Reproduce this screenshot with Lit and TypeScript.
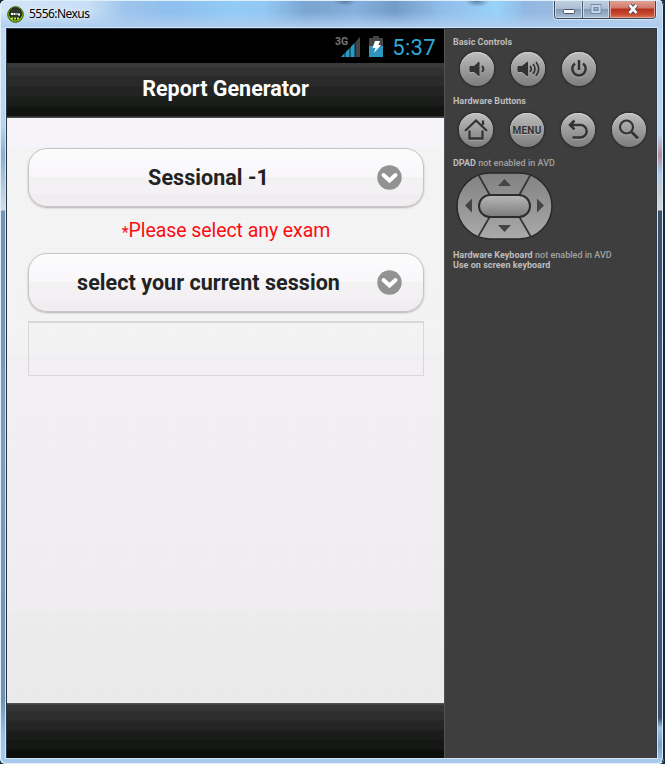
import { LitElement, html, css, svg } from "lit";
import { customElement, property } from "lit/decorators.js";

const glyphs: Record<string, unknown> = {
  down: svg`<path d="M10 14.500h4l5-4.500v14l-5-4.500h-4z" fill="#333" stroke-width="1"/><path d="M22 14q2.800 3 0 6" />`,
  up: svg`<path d="M7 14.500h4l5.500-4.500v14l-5.500-4.500h-4z" fill="#333" stroke-width="1"/><path d="M19 14q2.500 3 0 6M22 12q4 5 0 10M25 10q5.300 7 0 14" stroke-width="1.700"/>`,
  power: svg`<path d="M13 11.500A6.700 6.700 0 1 0 21 11.500M17 8v10" stroke-width="2.500"/>`,
  home: svg`<path d="M6 18 17 7.500 28 18M24 12V7.500M10.500 17.500V25.500H23.500V17.500" stroke-width="2.300"/>`,
  back: svg`<path d="M13.500 7.500 9 12 13.500 16.500M10 12H19.500a6.200 6.200 0 0 1 0 12.400H11.500" stroke-width="2.500"/>`,
  search: svg`<circle cx="14.500" cy="14" r="6.500" stroke-width="2.200"/><path d="M19.500 19 26 25.500" stroke-width="3"/>`,
};

@customElement("hw-button")
class HwButton extends LitElement {
  @property() kind = "";
  static styles = css`
    :host { display: block; width: 34px; height: 34px; border-radius: 50%; box-sizing: border-box;
      background: linear-gradient(#bebebe, #999 55%, #7d7d7d); box-shadow: 0 0 2px 1px #292929, inset 0 1px 0 #d0d0d0; }
    svg { display: block; fill: none; stroke: #333; stroke-width: 2; filter: drop-shadow(0 1px 0 #aaa); }
    .menu { display: block; text-align: center; font: 700 10px/35px Roboto, sans-serif; letter-spacing: 0.3px; color: #333; text-shadow: 0 1px 0 #bbb; }
  `;
  render() {
    return this.kind === "menu"
      ? html`<span class="menu">MENU</span>`
      : html`<svg width="34" height="34" viewBox="0 0 34 34">${glyphs[this.kind]}</svg>`;
  }
}

@customElement("select-field")
class SelectField extends LitElement {
  @property() label = "";
  static styles = css`
    :host { display: grid; grid-template-columns: 1fr 25px; align-items: center; box-sizing: border-box; height: 59px;
      padding: 0 21px 0 11px; border: 1px solid #c6c4c6; border-radius: 19px;
      background: linear-gradient(#fdfcfd, #f8f6f9 49%, #f3f2f3 50%, #f3f1f3 78%, #f1edf1 80%, #f1edf1);
      box-shadow: 0 1px 2px 0 #b5b3b5; color: #222; font: 700 21.500px/28px Roboto, sans-serif; letter-spacing: 0.05px; }
    span { text-align: center; white-space: nowrap; }
    svg { display: block; }
  `;
  render() {
    return html`<span>${this.label}</span>
      <svg width="25" height="25" viewBox="0 0 25 25"><circle cx="12.500" cy="12.500" r="12.200" fill="#929292"/>
      <path d="M6.500 10 12.500 15.500 18.500 10" fill="none" stroke="#fff" stroke-width="4" stroke-linecap="round"/></svg>`;
  }
}

@customElement("app-root")
class AppRoot extends LitElement {
  static styles = css`
    :host { display: block; width: 665px; height: 764px; overflow: hidden; background: #172b3a; font-family: Roboto, sans-serif; }
    * { box-sizing: border-box; }
    .window { position: relative; width: 664px; height: 764px; display: grid; grid-template-rows: 28px 730px 6px;
      border-radius: 6px 6px 5px 5px; background:
        linear-gradient(#a9c9ec, #a9c9ec) 0 758px / 100% 6px no-repeat,
        linear-gradient(#c5dbf2 28px, #bcd3ec 125px, #8faecb 155px, #d4dde6 210px, #7592b0 211px, #7e9dbb 450px, #7292b2 700px, #9dc1e5 735px, #a9c9ec) 0 0 / 7px 100% no-repeat,
        linear-gradient(#b3d4f5 28px, #bcd3ec 135px, #b38c96 155px, #aac8e8 173px, #c9cac9 190px, #d6d6d5 210px, #3c5066 211px, #4a5f78 500px, #3e5168 718px, #9dc1e5 728px, #7c9fc5 745px, #a9c9ec) 657px 0 / 7px 100% no-repeat, #a9c9ec; }
    .edge { position: absolute; inset: 0; border: 1px solid #e0f0fb; border-right: 1px solid #1b2732; border-radius: 6px; box-shadow: inset -1px 0 0 #d4e8f9; pointer-events: none; }
    .title { display: flex; align-items: flex-start; padding: 6px 8px 0 7px; border-radius: 6px 6px 0 0; background:
      linear-gradient(transparent 12px, rgba(174,205,239,.9) 26px),
      radial-gradient(ellipse 12px 5px at 345px 1px, rgba(77,111,146,.8), transparent),
      radial-gradient(ellipse 12px 6px at 477px 1px, rgba(77,111,146,.8), transparent),
      linear-gradient(90deg, #d4e5f7 0, #c6def6 90px, #9fc4ec 125px, #8ebfee 170px, #92cbf6 235px, #92c8f3 265px, #7ba6d2 305px, #7fa8d3 330px, #86b1de 355px, #739dc8 395px, #90bce9 440px, #98d2fa 497px, #92b8e2 525px, #9abae0 560px, #bed3ee 664px); }
    .logo { display: block; margin-right: 5px; }
    .name { font: 12px/15px "Noto Sans", sans-serif; color: #000; letter-spacing: -0.55px; text-shadow: 0 0 5px #fff; }
    .controls { display: flex; margin: -6px 0 0 auto; width: 102px; height: 19px; border: 1px solid #3c4654; border-top: 0; border-radius: 0 0 4px 4px; overflow: hidden; box-shadow: 0 0 0 1px #d5e8fa; }
    .controls svg { display: block; }
    .min, .max, .close { display: grid; place-items: center; background: linear-gradient(#c3d2e3, #adbfd4 47%, #8199b5 50%, #a8bfd7); box-shadow: inset 0 0 0 1px #cbd8e7; }
    .min { width: 28px; border-right: 1px solid #536478; }
    .max { width: 27px; border-right: 1px solid #536478; }
    .close { flex: 1; background: linear-gradient(#e2a696, #cf796a 45%, #b52f1d 50%, #c9492f 80%, #dc7c5d); box-shadow: inset 0 0 0 1px #e2a297; }
    .body { margin: 0 0 0 6px; display: grid; grid-template-columns: 439px 1fr; width: 651px; border-right: 1px solid #2c3540; outline: 1px solid #d2e5f5; background: #3e3e3e; }
    .phone { display: grid; grid-template-rows: 35px 55px 585px 55px; border-left: 1px solid #26384c; border-right: 1px solid #535353; }
    .status { display: flex; align-items: center; justify-content: flex-end; background: #000; border-top: 1px solid #26384c; padding-right: 8px; color: #30a9d9; font-size: 22px; line-height: 35px; }
    .status svg { display: block; }
    .status .time { padding-top: 3px; letter-spacing: 0.350px; margin-left: 8px; }
    .header { background: linear-gradient(#393939 0 4px, #303130 5px 13px, #292a29 14px 23px, #222322 24px 33px, #1b1d1b 34px 43px, #121412 44px 53px, #4c4c4c 54px); color: #fff; text-align: center; font-size: 21.500px; font-weight: 700; line-height: 51px; }
    .page { display: flex; flex-direction: column; padding: 30px 20px 0 21px;
      background: repeating-linear-gradient(90deg, rgba(0,0,0,.007) 0 1px, transparent 1px 10px), repeating-linear-gradient(rgba(0,0,0,.007) 0 1px, transparent 1px 10px), linear-gradient(#f7f5f9 0, #f6f4f8 29px, #f4f4f4 30px, #f3f3f3 235px, #f3f0f4 236px, #f0edf1 494px, #ececec 495px, #eaeaea); }
    .error { color: #fa0d12; font-size: 19.500px; line-height: 48px; text-align: center; height: 46px; letter-spacing: -0.07px; }
    .star { font-size: 16px; position: relative; top: 1px; }
    .box { height: 55px; margin-top: 9px; border: 1px solid #d8d8d8; border-top-width: 2px; }
    .footer { background: linear-gradient(#50534f 0 1px, #353535 2px 8px, #2c2d2c 9px 17px, #242524 18px 27px, #1b1d1b 28px 36px, #151715 37px 46px, #0c0e0c 47px 54px); }
    .side { padding: 8px 0 0 8px; border-top: 1px solid #26384c; color: #a2a2a2; font-size: 9px; line-height: 10px; font-weight: 500; letter-spacing: 0.02px; }
    .side b { color: #bdbdbd; font-weight: 700; }
    .row { display: flex; gap: 17px; padding-left: 7px; }
    .r1 { margin: 5px 0 10px; }
    .r2 { margin: 7px 0 11px; padding-left: 6px; }
    .line { height: 10px; white-space: nowrap; }
    .pad { display: block; margin: 4px 0 9px 2px; }
  `;
  render() {
    return html`<div class="window">
      <div class="title">
        <svg class="logo" width="17" height="17" viewBox="0 0 17 17"><circle cx="8.500" cy="8.500" r="7.800" fill="#83b520" stroke="#315006"/><circle cx="8.500" cy="7.800" r="6" fill="#30372d" stroke="#13200a"/><path d="M4 8h2M6.500 8h2M9.500 8h1M11 8.500h2" stroke="#fff" stroke-width="2"/><path d="M4 12.500h9" stroke="#b5ec30" stroke-width="2" stroke-dasharray="2 1"/></svg>
        <span class="name">5556:Nexus</span>
        <div class="controls">
          <div class="min"><svg width="14" height="18"><rect x="1.500" y="9.500" width="11" height="4" rx="1" fill="#fff" stroke="#4b5564"/></svg></div>
          <div class="max"><svg width="14" height="18"><rect x="2" y="4.500" width="10" height="9" fill="none" stroke="#738ba8"/><rect x="3.500" y="6" width="7" height="6" fill="none" stroke="#c5d5e7" stroke-width="2"/><rect x="5" y="7.500" width="4" height="3" fill="none" stroke="#738ba8"/></svg></div>
          <div class="close"><svg width="16" height="18"><path d="M4.500 5l7 8M11.500 5l-7 8" stroke="#513b48" stroke-width="4.500"/><path d="M4.500 5l7 8M11.500 5l-7 8" stroke="#f5f5f5" stroke-width="2.700"/></svg></div>
        </div>
      </div>
      <div class="body">
        <div class="phone">
          <div class="status">
            <svg width="50" height="35" viewBox="335 28 50 35"><text x="336" y="43.500" font-size="10.500" font-weight="700" fill="#777" font-family="Roboto, sans-serif">3G</text>
            <path d="M342 56 356 41.500V56z" fill="#299bc8"/><path d="M356 41.500 361 36v20h-5z" fill="#444"/><path d="M346 49v7M351 44v12M356 39v17" stroke="#000" stroke-width=".8"/>
            <path d="M370 37h4v-2h6v2h4v8h-14z" fill="#444"/><path d="M370 45h14v11h-14z" fill="#2e97bf"/><path d="M376 40h5l-1.500 4h2.500l-7 8 1.500-5h-3z" fill="#fff"/></svg>
            <span class="time">5:37</span>
          </div>
          <div class="header">Report Generator</div>
          <div class="page">
            <select-field label="Sessional -1"></select-field>
            <div class="error"><span class="star">*</span>Please select any exam</div>
            <select-field label="select your current session"></select-field>
            <div class="box"></div>
          </div>
          <div class="footer"></div>
        </div>
        <div class="side">
          <div class="line"><b>Basic Controls</b></div>
          <div class="row r1"><hw-button kind="down"></hw-button><hw-button kind="up"></hw-button><hw-button kind="power"></hw-button></div>
          <div class="line"><b>Hardware Buttons</b></div>
          <div class="row r2"><hw-button kind="home"></hw-button><hw-button kind="menu"></hw-button><hw-button kind="back"></hw-button><hw-button kind="search"></hw-button></div>
          <div class="line"><b>DPAD</b> not enabled in AVD</div>
          <svg class="pad" width="98" height="69" viewBox="455 173 98 69">
            <defs><linearGradient id="g" x1="0" y1="0" x2="0" y2="1"><stop stop-color="#828282"/><stop offset="1" stop-color="#aaa"/></linearGradient><linearGradient id="h" x1="0" y1="0" x2="0" y2="1"><stop stop-color="#b8b8b8"/><stop offset="1" stop-color="#7b7b7b"/></linearGradient></defs>
            <rect x="457" y="174" width="95" height="66" rx="33" fill="url(#g)" stroke="#292929" stroke-width="1.500"/>
            <path d="M478 175 492 200M531 175 517 200M478 238 492 214M531 238 517 214" stroke="#333" stroke-width="1.700"/>
            <rect x="479" y="196" width="51" height="22" rx="11" fill="url(#h)" stroke="#2d2d2d" stroke-width="2"/>
            <path d="M498 187 504.500 180 511 187zM498 226h13l-6.500 7zM465 206.500l7-7v14zM544 206.500l-7-7v14z" fill="#444"/>
          </svg>
          <div class="line"><b>Hardware Keyboard</b> not enabled in AVD</div>
          <div class="line"><b>Use on screen keyboard</b></div>
        </div>
      </div>
      <div class="edge"></div>
    </div>`;
  }
}
